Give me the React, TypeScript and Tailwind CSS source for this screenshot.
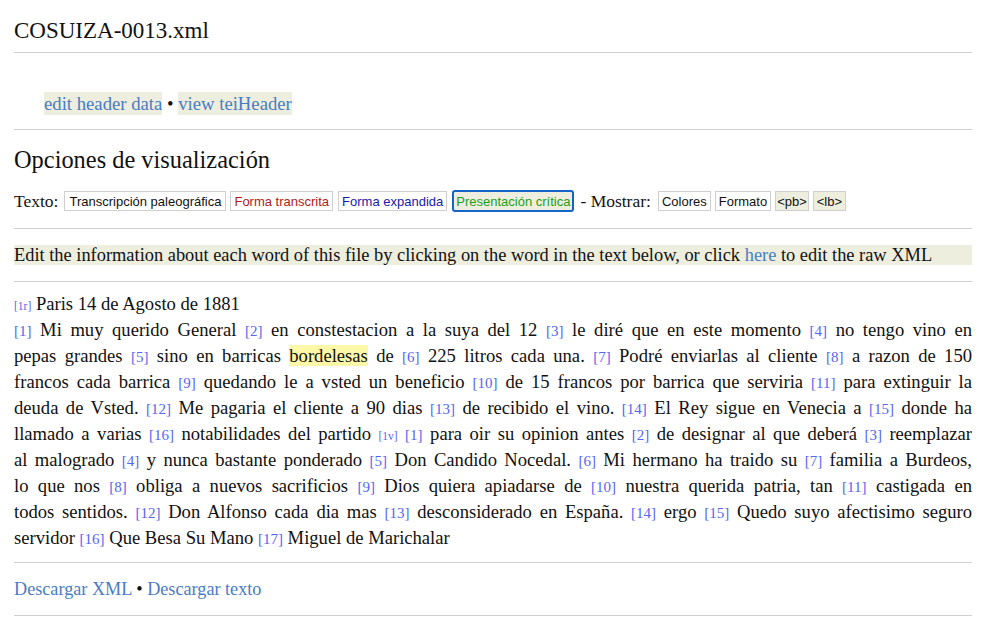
import React from "react";

const serif = { fontFamily: '"Liberation Serif", "DejaVu Serif", serif' };

const lines: string[] = [
  "{1} Mi muy querido General {2} en constestacion a la suya del 12 {3} le diré que en este momento {4} no tengo vino en",
  "pepas grandes {5} sino en barricas ~bordelesas~ de {6} 225 litros cada una. {7} Podré enviarlas al cliente {8} a razon de 150",
  "francos cada barrica {9} quedando le a vsted un beneficio {10} de 15 francos por barrica que serviria {11} para extinguir la",
  "deuda de Vsted. {12} Me pagaria el cliente a 90 dias {13} de recibido el vino. {14} El Rey sigue en Venecia a {15} donde ha",
  "llamado a varias {16} notabilidades del partido <1v> {1} para oir su opinion antes {2} de designar al que deberá {3} reemplazar",
  "al malogrado {4} y nunca bastante ponderado {5} Don Candido Nocedal. {6} Mi hermano ha traido su {7} familia a Burdeos,",
  "lo que nos {8} obliga a nuevos sacrificios {9} Dios quiera apiadarse de {10} nuestra querida patria, tan {11} castigada en",
  "todos sentidos. {12} Don Alfonso cada dia mas {13} desconsiderado en España. {14} ergo {15} Quedo suyo afectisimo seguro",
  "servidor {16} Que Besa Su Mano {17} Miguel de Marichalar",
];

function renderLine(s: string) {
  const parts = s.split(/(\{\d+\}|<\w+>|~[^~]+~)/);
  return parts.map((p, i) => {
    if (/^\{\d+\}$/.test(p))
      return (
        <span key={i} className="text-[15px] leading-none text-[#5566f0]">
          [{p.slice(1, -1)}]
        </span>
      );
    if (/^<\w+>$/.test(p))
      return (
        <span key={i} className="text-[11.5px] leading-none text-[#5566f0]">
          [{p.slice(1, -1)}]
        </span>
      );
    if (/^~[^~]+~$/.test(p))
      return (
        <span key={i} className="bg-[#fdf8a8]">
          {p.slice(1, -1)}
        </span>
      );
    return <React.Fragment key={i}>{p}</React.Fragment>;
  });
}

function Btn({
  children,
  cls = "",
}: {
  children: React.ReactNode;
  cls?: string;
}) {
  return (
    <span
      className={
        "inline-flex h-[20px] items-center border border-[#cfcfcf] text-[13px] leading-none " +
        cls
      }
      style={{ fontFamily: '"Liberation Sans", Arial, sans-serif' }}
    >
      {children}
    </span>
  );
}

export default function App() {
  return (
    <div className="min-h-[617px] bg-white px-[14px] text-[#111]" style={serif}>
      <div className="border-b border-[#d0d0d0] pb-[8px] pt-[18px] text-[23px] leading-[26px]">
        COSUIZA-0013.xml
      </div>

      <div className="border-b border-[#d0d0d0] pb-[14px] pl-[30px] pt-[40px] text-[18.7px] leading-[22px]">
        <span className="bg-[#eeeedf] py-[1px] text-[#4a7cc4]">edit header data</span>
        <span> • </span>
        <span className="bg-[#eeeedf] py-[1px] text-[#4a7cc4]">view teiHeader</span>
      </div>

      <div className="border-b border-[#d0d0d0] pb-[16px]">
        <div className="pt-[17px] text-[24.4px] leading-[26px]">
          Opciones de visualización
        </div>
        <div className="mt-[17px] flex h-[22px] items-center text-[17.5px]">
          <span className="mr-[6px]">Texto:</span>
          <Btn cls="px-[4px] text-[#111]">Transcripción paleográfica</Btn>
          <span className="w-[4px]" />
          <Btn cls="px-[3px] text-[#b21a1a]">Forma transcrita</Btn>
          <span className="w-[5px]" />
          <Btn cls="px-[3px] text-[#1a1aa8]">Forma expandida</Btn>
          <span className="w-[5px]" />
          <span
            className="inline-flex h-[22px] items-center rounded-[3px] border-2 border-[#1565c8] bg-[#eeeedf] px-[2px] text-[13px] leading-none text-[#1e9e1e]"
            style={{ fontFamily: '"Liberation Sans", Arial, sans-serif' }}
          >
            Presentación crítica
          </span>
          <span className="ml-[6px] mr-[7px]">- Mostrar:</span>
          <Btn cls="px-[3px] text-[#111]">Colores</Btn>
          <span className="w-[4px]" />
          <Btn cls="px-[3px] text-[#111]">Formato</Btn>
          <span className="w-[4px]" />
          <Btn cls="bg-[#eeeedf] px-[1px] text-[#111]">&lt;pb&gt;</Btn>
          <span className="w-[4px]" />
          <Btn cls="bg-[#eeeedf] px-[3px] text-[#111]">&lt;lb&gt;</Btn>
        </div>
      </div>

      <div className="border-b border-[#d0d0d0] py-[16px]">
        <div className="whitespace-nowrap bg-[#eeeedf] text-[18.4px] leading-[20px]">
          Edit the information about each word of this file by clicking on the word in the text below, or click{" "}
          <span className="text-[#4a7cc4]">here</span> to edit the raw XML
        </div>
      </div>

      <div className="border-b border-[#d0d0d0] pb-[11px] pt-[9px] text-[18.6px] leading-[26px]">
        <div className="h-[26px]">
          <span className="text-[11.5px] leading-none text-[#5566f0]">[1r]</span> Paris 14 de Agosto de 1881
        </div>
        {lines.map((l, i) => (
          <div
            key={i}
            className={
              i < lines.length - 1
                ? "h-[26px] whitespace-nowrap text-justify [text-align-last:justify]"
                : "h-[26px] whitespace-nowrap"
            }
          >
            {renderLine(l)}
          </div>
        ))}
      </div>

      <div className="border-b border-[#d0d0d0] pb-[14px] pt-[14px] text-[18.2px] leading-[24px]">
        <span className="text-[#4a7cc4]">Descargar XML</span>
        <span> • </span>
        <span className="text-[#4a7cc4]">Descargar texto</span>
      </div>
    </div>
  );
}
